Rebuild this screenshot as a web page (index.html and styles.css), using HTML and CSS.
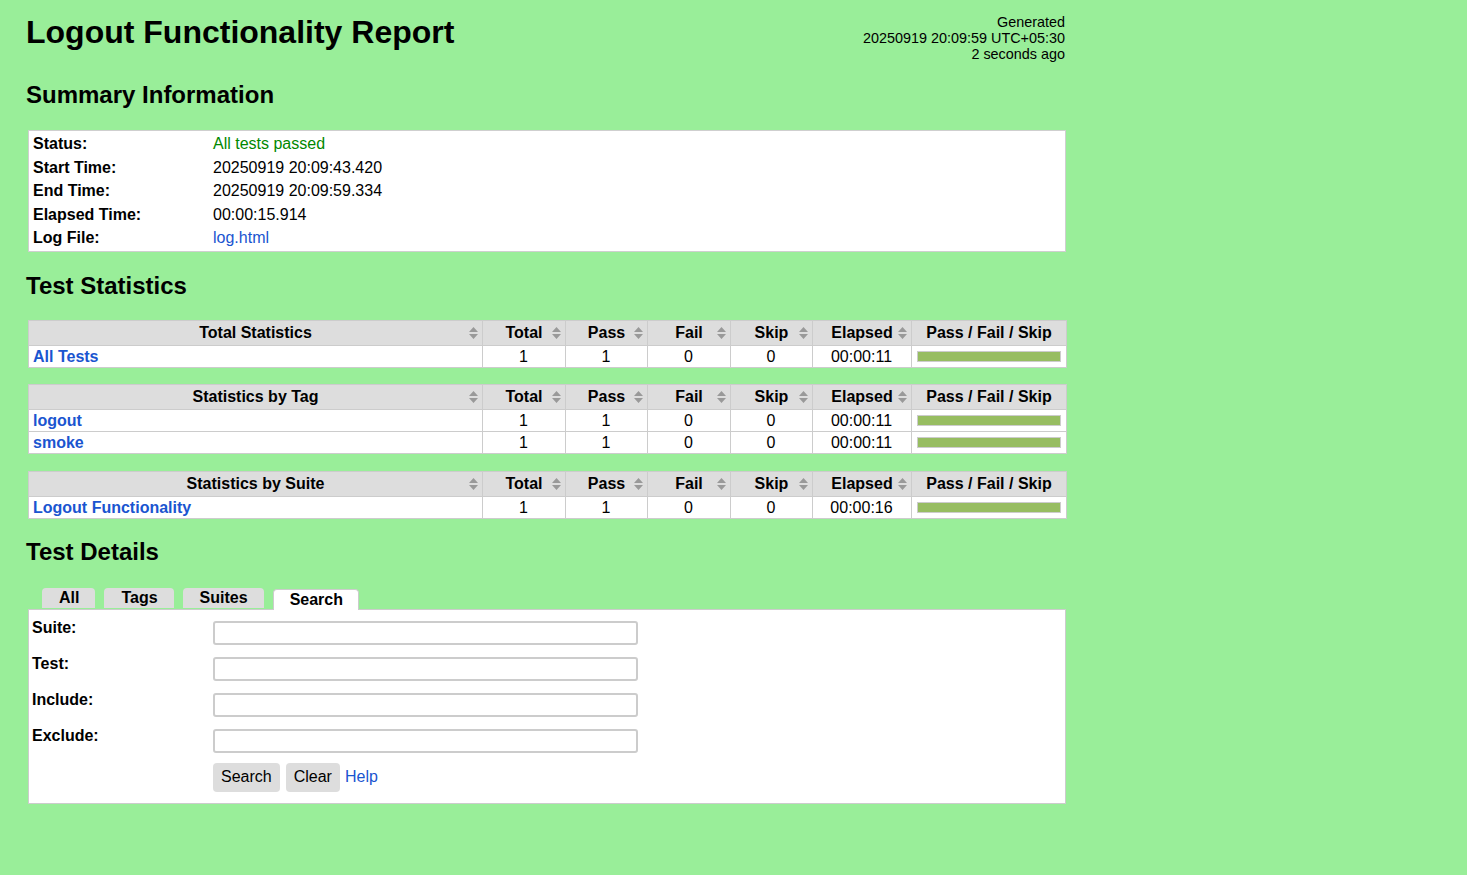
FILE: index.html
```html
<!DOCTYPE html>
<html lang="en">
<head>
<meta charset="utf-8">
<title>Logout Functionality Report</title>
<link rel="stylesheet" href="styles.css">
</head>
<body>
<div class="page">
  <div class="header">
    <h1>Logout Functionality Report</h1>
    <div class="generated">Generated<br>20250919 20:09:59 UTC+05:30<br>2 seconds ago</div>
  </div>

  <h2>Summary Information</h2>
  <table class="details">
    <tr><th>Status:</th><td class="pass">All tests passed</td></tr>
    <tr><th>Start Time:</th><td>20250919 20:09:43.420</td></tr>
    <tr><th>End Time:</th><td>20250919 20:09:59.334</td></tr>
    <tr><th>Elapsed Time:</th><td>00:00:15.914</td></tr>
    <tr><th>Log File:</th><td><a href="#">log.html</a></td></tr>
  </table>

  <h2>Test Statistics</h2>
  <table class="statistics">
    <colgroup><col class="c-name"><col class="c-stat"><col class="c-stat2"><col class="c-stat"><col class="c-stat2"><col class="c-elapsed"><col class="c-graph"></colgroup>
    <tr>
      <th class="sortable">Total Statistics<svg class="sort" viewBox="0 0 9 12"><path d="M4.5 0 L9 5 H0 Z M4.5 12 L9 7 H0 Z"/></svg></th>
      <th class="sortable">Total<svg class="sort" viewBox="0 0 9 12"><path d="M4.5 0 L9 5 H0 Z M4.5 12 L9 7 H0 Z"/></svg></th>
      <th class="sortable">Pass<svg class="sort" viewBox="0 0 9 12"><path d="M4.5 0 L9 5 H0 Z M4.5 12 L9 7 H0 Z"/></svg></th>
      <th class="sortable">Fail<svg class="sort" viewBox="0 0 9 12"><path d="M4.5 0 L9 5 H0 Z M4.5 12 L9 7 H0 Z"/></svg></th>
      <th class="sortable">Skip<svg class="sort" viewBox="0 0 9 12"><path d="M4.5 0 L9 5 H0 Z M4.5 12 L9 7 H0 Z"/></svg></th>
      <th class="sortable">Elapsed<svg class="sort" viewBox="0 0 9 12"><path d="M4.5 0 L9 5 H0 Z M4.5 12 L9 7 H0 Z"/></svg></th>
      <th>Pass / Fail / Skip</th>
    </tr>
    <tr>
      <td class="name"><a href="#">All Tests</a></td>
      <td class="num">1</td><td class="num">1</td><td class="num">0</td><td class="num">0</td>
      <td class="num">00:00:11</td>
      <td><div class="graph"><div class="pass-bar"></div></div></td>
    </tr>
  </table>

  <table class="statistics">
    <colgroup><col class="c-name"><col class="c-stat"><col class="c-stat2"><col class="c-stat"><col class="c-stat2"><col class="c-elapsed"><col class="c-graph"></colgroup>
    <tr>
      <th class="sortable">Statistics by Tag<svg class="sort" viewBox="0 0 9 12"><path d="M4.5 0 L9 5 H0 Z M4.5 12 L9 7 H0 Z"/></svg></th>
      <th class="sortable">Total<svg class="sort" viewBox="0 0 9 12"><path d="M4.5 0 L9 5 H0 Z M4.5 12 L9 7 H0 Z"/></svg></th>
      <th class="sortable">Pass<svg class="sort" viewBox="0 0 9 12"><path d="M4.5 0 L9 5 H0 Z M4.5 12 L9 7 H0 Z"/></svg></th>
      <th class="sortable">Fail<svg class="sort" viewBox="0 0 9 12"><path d="M4.5 0 L9 5 H0 Z M4.5 12 L9 7 H0 Z"/></svg></th>
      <th class="sortable">Skip<svg class="sort" viewBox="0 0 9 12"><path d="M4.5 0 L9 5 H0 Z M4.5 12 L9 7 H0 Z"/></svg></th>
      <th class="sortable">Elapsed<svg class="sort" viewBox="0 0 9 12"><path d="M4.5 0 L9 5 H0 Z M4.5 12 L9 7 H0 Z"/></svg></th>
      <th>Pass / Fail / Skip</th>
    </tr>
    <tr>
      <td class="name"><a href="#">logout</a></td>
      <td class="num">1</td><td class="num">1</td><td class="num">0</td><td class="num">0</td>
      <td class="num">00:00:11</td>
      <td><div class="graph"><div class="pass-bar"></div></div></td>
    </tr>
    <tr>
      <td class="name"><a href="#">smoke</a></td>
      <td class="num">1</td><td class="num">1</td><td class="num">0</td><td class="num">0</td>
      <td class="num">00:00:11</td>
      <td><div class="graph"><div class="pass-bar"></div></div></td>
    </tr>
  </table>

  <table class="statistics">
    <colgroup><col class="c-name"><col class="c-stat"><col class="c-stat2"><col class="c-stat"><col class="c-stat2"><col class="c-elapsed"><col class="c-graph"></colgroup>
    <tr>
      <th class="sortable">Statistics by Suite<svg class="sort" viewBox="0 0 9 12"><path d="M4.5 0 L9 5 H0 Z M4.5 12 L9 7 H0 Z"/></svg></th>
      <th class="sortable">Total<svg class="sort" viewBox="0 0 9 12"><path d="M4.5 0 L9 5 H0 Z M4.5 12 L9 7 H0 Z"/></svg></th>
      <th class="sortable">Pass<svg class="sort" viewBox="0 0 9 12"><path d="M4.5 0 L9 5 H0 Z M4.5 12 L9 7 H0 Z"/></svg></th>
      <th class="sortable">Fail<svg class="sort" viewBox="0 0 9 12"><path d="M4.5 0 L9 5 H0 Z M4.5 12 L9 7 H0 Z"/></svg></th>
      <th class="sortable">Skip<svg class="sort" viewBox="0 0 9 12"><path d="M4.5 0 L9 5 H0 Z M4.5 12 L9 7 H0 Z"/></svg></th>
      <th class="sortable">Elapsed<svg class="sort" viewBox="0 0 9 12"><path d="M4.5 0 L9 5 H0 Z M4.5 12 L9 7 H0 Z"/></svg></th>
      <th>Pass / Fail / Skip</th>
    </tr>
    <tr>
      <td class="name"><a href="#">Logout Functionality</a></td>
      <td class="num">1</td><td class="num">1</td><td class="num">0</td><td class="num">0</td>
      <td class="num">00:00:16</td>
      <td><div class="graph"><div class="pass-bar"></div></div></td>
    </tr>
  </table>

  <h2 class="details-title">Test Details</h2>
  <div class="tabs">
    <div class="tab">All</div>
    <div class="tab">Tags</div>
    <div class="tab">Suites</div>
    <div class="tab selected">Search</div>
  </div>
  <div class="panel">
    <div class="form">
      <label class="lbl">Suite:</label><input class="field" type="text">
      <label class="lbl">Test:</label><input class="field" type="text">
      <label class="lbl">Include:</label><input class="field" type="text">
      <label class="lbl">Exclude:</label><input class="field" type="text">
      <span></span>
      <div class="actions">
        <button class="btn" type="button">Search</button>
        <button class="btn" type="button">Clear</button>
        <a href="#" class="help">Help</a>
      </div>
    </div>
  </div>
</div>
</body>
</html>
```

FILE: styles.css
```css
html, body {
  margin: 0;
  padding: 0;
}
body {
  background: #99ee99;
  font-family: "Liberation Sans", Arial, Helvetica, sans-serif;
  font-size: 16px;
  color: #000;
}
a {
  color: #1a55d0;
  text-decoration: none;
}
.page {
  padding: 9px 26px 40px 26px;
}
.header {
  width: 1039px;
  height: 52px;
  display: flex;
  justify-content: space-between;
  align-items: flex-start;
}
h1 {
  margin: 5px 0 0 0;
  font-size: 32px;
  line-height: 37px;
  font-weight: bold;
}
.generated {
  margin-top: 5px;
  font-size: 14.4px;
  line-height: 16px;
  text-align: right;
  white-space: nowrap;
}
h2 {
  font-size: 24px;
  line-height: 28px;
  margin: 20px 0 20px 0;
  font-weight: bold;
}
h2.details-title {
  margin: 19px 0 22px 0;
}
.details {
  margin-left: 2px;
  margin-top: 21px;
  width: 1038px;
  background: #fff;
  border: 1px solid #cfcfcf;
  border-spacing: 0;
  padding: 1px 0;
}
.details th, .details td {
  padding: 3px 4px;
  line-height: 17.5px;
  vertical-align: top;
}
.details th {
  width: 172px;
  text-align: left;
  font-weight: bold;
}
.details td.pass {
  color: #008800;
}
.statistics {
  margin-left: 2px;
  width: 1039px;
  border-collapse: collapse;
  table-layout: fixed;
  margin-bottom: 16.5px;
}
.c-name { width: 454px; }
.c-stat { width: 83px; }
.c-stat2 { width: 82px; }
.c-elapsed { width: 99px; }
.c-graph { width: 155px; }
.statistics th, .statistics td {
  border: 1px solid #ccc;
}
.statistics th {
  background: #ddd;
  padding: 3px 5px;
  line-height: 18px;
  font-weight: bold;
  text-align: center;
  white-space: nowrap;
  position: relative;
}
.statistics td {
  background: #fff;
  padding: 1px 5px 1px 4px;
  line-height: 19px;
}
.statistics td.name {
  font-weight: bold;
}
.statistics td.num {
  text-align: center;
}
.sort {
  position: absolute;
  right: 4px;
  top: 6px;
  width: 9px;
  height: 12px;
  fill: #999;
}
.graph {
  width: 142px;
  height: 9px;
  border: 1px solid #ccc;
  background: #fff;
  margin: 1px 0 1px 1px;
}
.pass-bar {
  width: 100%;
  height: 100%;
  background: #97bd61;
}
.tabs {
  display: flex;
  gap: 9px;
  padding-left: 16px;
  align-items: flex-start;
  height: 21px;
}
.tab {
  background: #ddd;
  font-weight: bold;
  line-height: 18px;
  height: 20px;
  box-sizing: border-box;
  padding: 1px 16px 0 17px;
  border-radius: 4px 4px 0 0;
}
.tab.selected {
  background: #fff;
  border: 1px solid #ccc;
  border-bottom: none;
  height: 21px;
  padding: 1px 15px 0 16px;
  margin-top: 1px;
  position: relative;
  z-index: 1;
}
.panel {
  margin-left: 2px;
  width: 1036px;
  background: #fff;
  border: 1px solid #ccc;
  padding: 9px 0 11px 0;
}
.form {
  display: grid;
  grid-template-columns: 184px 425px;
  row-gap: 10px;
}
.lbl {
  font-weight: bold;
  padding-left: 3px;
  line-height: 18px;
}
.field {
  width: 425px;
  height: 24px;
  box-sizing: border-box;
  border: 2px solid #ccc;
  border-radius: 3px;
  background: #fff;
  margin: 2px 0 0 0;
  padding: 0 4px;
  font: inherit;
}
.actions {
  display: flex;
  align-items: center;
  gap: 6px;
  margin-top: 0;
}
.btn {
  font-family: "Liberation Sans", Arial, sans-serif;
  font-size: 16px;
  background: #ddd;
  border: none;
  border-radius: 4px;
  height: 29px;
  padding: 0 8px;
  color: #000;
}
.help {
  margin-left: -1px;
}
```
